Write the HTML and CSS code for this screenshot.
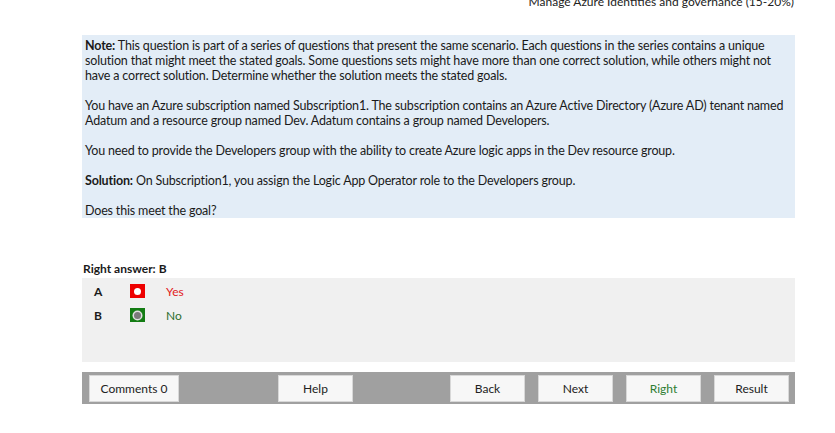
FILE: index.html
```html
<!DOCTYPE html>
<html>
<head>
<meta charset="utf-8">
<link rel="stylesheet" href="styles.css">
</head>
<body>
<div class="page">
  <div class="topic">Manage Azure Identities and governance (15-20%)</div>
  <div class="question">
    <p><b>Note:</b> This question is part of a series of questions that present the same scenario. Each questions in the series contains a unique<br>solution that might meet the stated goals. Some questions sets might have more than one correct solution, while others might not<br>have a correct solution. Determine whether the solution meets the stated goals.</p>
    <p>You have an Azure subscription named Subscription1. The subscription contains an Azure Active Directory (Azure AD) tenant named<br>Adatum and a resource group named Dev. Adatum contains a group named Developers.</p>
    <p>You need to provide the Developers group with the ability to create Azure logic apps in the Dev resource group.</p>
    <p><b>Solution:</b> On Subscription1, you assign the Logic App Operator role to the Developers group.</p>
    <p>Does this meet the goal?</p>
  </div>
  <div class="right-answer">Right answer: B</div>
  <div class="answers">
    <div class="row">
      <span class="letter">A</span>
      <span class="mark mark-wrong"><span class="dot"></span></span>
      <span class="opt opt-wrong">Yes</span>
    </div>
    <div class="row">
      <span class="letter">B</span>
      <span class="mark mark-right"><span class="dot"></span></span>
      <span class="opt opt-right">No</span>
    </div>
  </div>
  <div class="bar">
    <button class="btn btn-comments">Comments 0</button>
    <button class="btn btn-help">Help</button>
    <div class="spacer"></div>
    <button class="btn">Back</button>
    <button class="btn">Next</button>
    <button class="btn btn-right">Right</button>
    <button class="btn">Result</button>
  </div>
</div>
</body>
</html>
```
FILE: styles.css
```css
html, body {
  margin: 0;
  padding: 0;
  background: #ffffff;
}
body {
  font-family: "Lato", "Open Sans", sans-serif;
  font-size: 12px;
  color: #1a1a1a;
}
.page {
  width: 713px;
  margin-left: 82px;
  display: flex;
  flex-direction: column;
}
.topic {
  text-align: right;
  font-size: 12px;
  line-height: 14px;
  margin-top: -5px;
  color: #222;
  padding-right: 1px;
}
.question {
  margin-top: 26px;
  background: #e3edf7;
  padding: 3px 3px 0 3px;
  height: 183px;
  box-sizing: border-box;
  font-size: 12.5px;
  letter-spacing: -0.17px;
}
.question p {
  margin: 0 0 15px 0;
  line-height: 15px;
  white-space: nowrap;
}
.question p:last-child {
  margin-bottom: 0;
}
.right-answer {
  margin-top: 43px;
  font-weight: bold;
  line-height: 15px;
  padding-left: 1px;
}
.answers {
  margin-top: 2px;
  background: #f0f0f0;
  height: 84px;
  padding-top: 6px;
  box-sizing: border-box;
  display: flex;
  flex-direction: column;
  gap: 10px;
}
.row {
  display: flex;
  align-items: center;
  height: 14px;
}
.letter {
  width: 48px;
  padding-left: 12px;
  box-sizing: border-box;
  font-weight: bold;
}
.mark {
  width: 15px;
  height: 14px;
  display: flex;
  align-items: center;
  justify-content: center;
}
.mark-wrong { background: #ee0000; }
.mark-right { background: #137c13; }
.dot {
  width: 7px;
  height: 7px;
  border-radius: 50%;
  background: #ffffff;
}
.mark-right .dot {
  background: #7a7a7a;
  box-shadow: 0 0 0 1.5px #e0e0e0;
}
.opt {
  margin-left: 21px;
}
.opt-wrong { color: #e21a1a; }
.opt-right { color: #2e6e2e; }
.bar {
  margin-top: 10px;
  background: #a0a0a0;
  height: 32px;
  display: flex;
  align-items: center;
  padding: 0 6px 0 7px;
  box-sizing: border-box;
  gap: 13px;
}
.btn {
  font-family: inherit;
  font-size: 12px;
  height: 27px;
  width: 75px;
  background: #f7f7f7;
  border: 1px solid #d8d8d8;
  color: #222;
  padding: 0;
  margin: 0;
}
.btn-comments {
  width: 90px;
  margin-right: 86px;
}
.btn-right { color: #2e7d32; }
.spacer { flex: 1; }
```
